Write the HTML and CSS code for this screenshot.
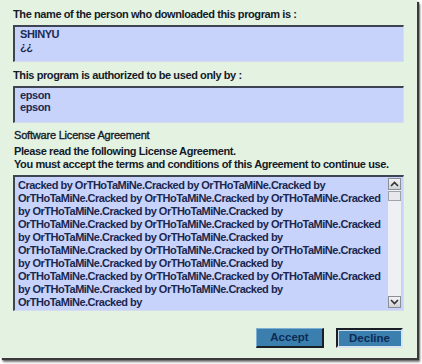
FILE: index.html
```html
<!DOCTYPE html>
<html>
<head>
<meta charset="utf-8">
<link rel="stylesheet" href="styles.css">
</head>
<body>
<div class="panel">
  <div class="label">The name of the person who downloaded this program is :</div>
  <div class="box">SHINYU<br>¿¿</div>
  <div class="label">This program is authorized to be used only by :</div>
  <div class="box last">epson<br>epson</div>
  <div class="heading">Software License Agreement</div>
  <div class="note">Please read the following License Agreement.<br>You must accept the terms and conditions of this Agreement to continue use.</div>
  <div class="textarea">
    <div class="text">Cracked by OrTHoTaMiNe.Cracked by OrTHoTaMiNe.Cracked by<br>OrTHoTaMiNe.Cracked by OrTHoTaMiNe.Cracked by OrTHoTaMiNe.Cracked<br>by OrTHoTaMiNe.Cracked by OrTHoTaMiNe.Cracked by<br>OrTHoTaMiNe.Cracked by OrTHoTaMiNe.Cracked by OrTHoTaMiNe.Cracked<br>by OrTHoTaMiNe.Cracked by OrTHoTaMiNe.Cracked by<br>OrTHoTaMiNe.Cracked by OrTHoTaMiNe.Cracked by OrTHoTaMiNe.Cracked<br>by OrTHoTaMiNe.Cracked by OrTHoTaMiNe.Cracked by<br>OrTHoTaMiNe.Cracked by OrTHoTaMiNe.Cracked by OrTHoTaMiNe.Cracked<br>by OrTHoTaMiNe.Cracked by OrTHoTaMiNe.Cracked by<br>OrTHoTaMiNe.Cracked by</div>
    <div class="scrollbar">
      <div class="sbtn"><svg width="9" height="6" viewBox="0 0 9 6"><path d="M1 5 L4.5 1.5 L8 5" fill="none" stroke="#333" stroke-width="1.6"/></svg></div>
      <div class="thumb"></div>
      <div class="track"></div>
      <div class="sbtn"><svg width="9" height="6" viewBox="0 0 9 6"><path d="M1 1 L4.5 4.5 L8 1" fill="none" stroke="#333" stroke-width="1.6"/></svg></div>
    </div>
  </div>
  <div class="buttons">
    <div class="btn accept">Accept</div>
    <div class="btn decline">Decline</div>
  </div>
</div>
</body>
</html>
```
FILE: styles.css
```css
html, body {
  margin: 0;
  padding: 0;
  background: #ffffff;
}
body {
  width: 422px;
  height: 364px;
  overflow: hidden;
}
.panel {
  width: 417px;
  height: 358px;
  box-sizing: border-box;
  background: #e4f2e2;
  box-shadow: 2px 2px 1px #3a3a3a, 3px 4px 2px #777;
  padding: 8px 13px 0 13px;
  font-family: "Liberation Sans", Arial, sans-serif;
  font-size: 11px;
  font-weight: bold;
  letter-spacing: -0.4px;
  color: #141a28;
  white-space: nowrap;
}
.label {
  height: 13px;
  line-height: 13px;
  margin-bottom: 4px;
}
.box {
  height: 37px;
  box-sizing: border-box;
  background: #c7d3fb;
  border-top: 2px solid #3e4452;
  border-left: 2px solid #3e4452;
  border-right: 1px solid #d4dcee;
  border-bottom: 1px solid #d4dcee;
  padding: 1px 0 0 5px;
  line-height: 12px;
  color: #1c2a52;
  margin-bottom: 7px;
}
.box.last {
  margin-bottom: 6px;
}
.heading {
  font-weight: normal;
  -webkit-text-stroke: 0.35px #141a28;
  letter-spacing: -0.2px;
  padding-left: 1px;
  line-height: 13px;
  margin-bottom: 3px;
}
.note {
  line-height: 13px;
  padding-left: 1px;
  margin-bottom: 4px;
}
.textarea {
  display: flex;
  height: 136px;
  box-sizing: border-box;
  background: #c7d3fb;
  border-top: 2px solid #3e4452;
  border-left: 2px solid #3e4452;
  border-right: 1px solid #d4dcee;
  border-bottom: 1px solid #d4dcee;
}
.text {
  flex: 1;
  padding: 2px 0 0 3px;
  line-height: 13px;
  font-size: 11px;
  letter-spacing: -0.5px;
  color: #1a274e;
}
.scrollbar {
  width: 13px;
  margin: 1px 2px 2px 0;
  display: flex;
  flex-direction: column;
  background: #eef0f4;
}
.sbtn {
  height: 12px;
  box-sizing: border-box;
  border: 1px solid #8a8e96;
  background: linear-gradient(#f4f4f4, #cfd2d6);
  display: flex;
  align-items: center;
  justify-content: center;
}
.thumb {
  height: 10px;
  margin-top: 1px;
  box-sizing: border-box;
  border: 1px solid #a0a4aa;
  background: #e6e8ec;
}
.track {
  flex: 1;
}
.buttons {
  display: flex;
  justify-content: flex-end;
  gap: 12px;
  margin-top: 17px;
  padding-right: 1px;
}
.btn {
  height: 20px;
  box-sizing: border-box;
  background: #3a7fae;
  color: #0e2a54;
  font-size: 11.5px;
  letter-spacing: 0;
  text-align: center;
  line-height: 17px;
}
.accept {
  width: 68px;
  border-top: 1px solid #7fb0d4;
  border-left: 1px solid #7fb0d4;
  border-right: 2px solid #1a1e26;
  border-bottom: 2px solid #1a1e26;
}
.decline {
  width: 67px;
  border: 2px solid #1a1e26;
  border-right-color: #d8e4f0;
  border-bottom-color: #d8e4f0;
  box-shadow: inset 1px 1px 0 #c8dcea;
}
```
